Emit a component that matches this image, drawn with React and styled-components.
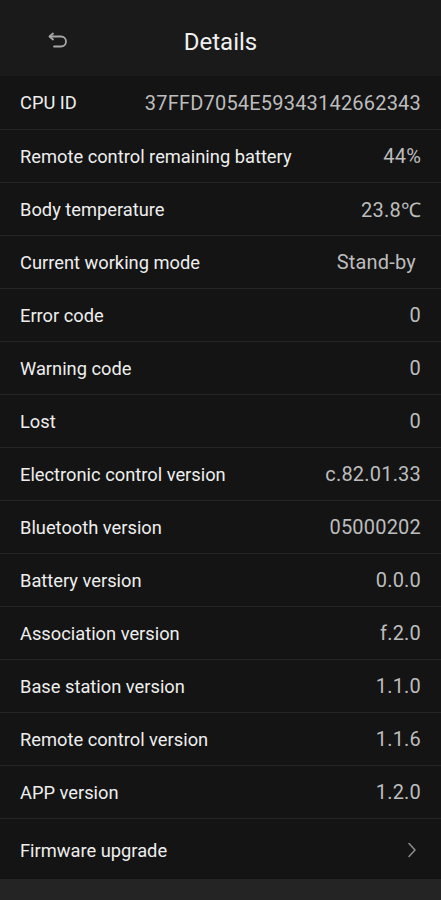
import React from 'react';
import styled, { createGlobalStyle } from 'styled-components';

const GlobalStyle = createGlobalStyle`
  html, body {
    margin: 0;
    padding: 0;
    background: #242424;
  }
  body {
    font-family: Roboto, "Noto Sans", "Liberation Sans", sans-serif;
    -webkit-font-smoothing: antialiased;
  }
`

const Page = styled.div`
  width: 441px;
  height: 900px;
  display: flex;
  flex-direction: column;
  background: #242424;
`

const Header = styled.div`
  position: relative;
  height: 76px;
  display: flex;
  align-items: center;
  justify-content: center;
  background: #1a1a1a;
`

const BackButton = styled.button`
  position: absolute;
  left: 44px;
  top: 27px;
  width: 28px;
  height: 26px;
  padding: 0;
  border: none;
  background: none;
  display: flex;
  align-items: center;
  justify-content: center;
  color: #a8a8a8;
`

const Title = styled.h1`
  margin: 8px 0 0 0;
  font-size: 24px;
  font-weight: 400;
  color: #f0f0f0;
`

const List = styled.div`
  display: flex;
  flex-direction: column;
  background: #141414;
`

const Row = styled.div`
  height: ${props => props.tall ? '58px' : '52px'};
  display: flex;
  align-items: center;
  justify-content: space-between;
  padding: ${props => props.tall ? '2px 20px 0 20px' : '0 20px'};
  border-top: 1px solid #252525;
  background: #141414;
  &:first-child {
    border-top: none;
    height: 53px;
  }
`

const Label = styled.span`
  font-size: 18.3px;
  color: #eeeeee;
`

const Value = styled.span`
  font-size: 20px;
  letter-spacing: 0.2px;
  color: #bdbdbd;
  padding-right: ${props => props.pad ? '5px' : '0'};
`

const Chevron = styled.span`
  display: flex;
  padding-right: 4px;
  color: #8a8a8a;
`

const rows = [
  ['CPU ID', '37FFD7054E59343142662343'],
  ['Remote control remaining battery', '44%'],
  ['Body temperature', '23.8℃'],
  ['Current working mode', 'Stand-by', true],
  ['Error code', '0'],
  ['Warning code', '0'],
  ['Lost', '0'],
  ['Electronic control version', 'c.82.01.33'],
  ['Bluetooth version', '05000202'],
  ['Battery version', '0.0.0'],
  ['Association version', 'f.2.0'],
  ['Base station version', '1.1.0'],
  ['Remote control version', '1.1.6'],
  ['APP version', '1.2.0'],
]

const App = () => {
  return (
    <Page>
      <GlobalStyle />
      <Header>
        <BackButton>
          <svg width="22" height="17" viewBox="0 0 22 17" fill="none" stroke="currentColor" strokeWidth="1.8" strokeLinecap="round" strokeLinejoin="round">
            <path d="M6 1.5 2.5 4.5 6 7.5" />
            <path d="M3 4.5h11a5 5 0 0 1 0 10H7" />
          </svg>
        </BackButton>
        <Title>Details</Title>
      </Header>
      <List>
        {rows.map(([label, value, pad]) => (
          <Row key={label}>
            <Label>{label}</Label>
            <Value pad={pad}>{value}</Value>
          </Row>
        ))}
        <Row tall>
          <Label>Firmware upgrade</Label>
          <Chevron>
            <svg width="10" height="16" viewBox="0 0 10 16" fill="none" stroke="currentColor" strokeWidth="1.6" strokeLinecap="round" strokeLinejoin="round">
              <path d="M2 1.5 8 8l-6 6.5" />
            </svg>
          </Chevron>
        </Row>
      </List>
    </Page>
  )
}

export default App;
